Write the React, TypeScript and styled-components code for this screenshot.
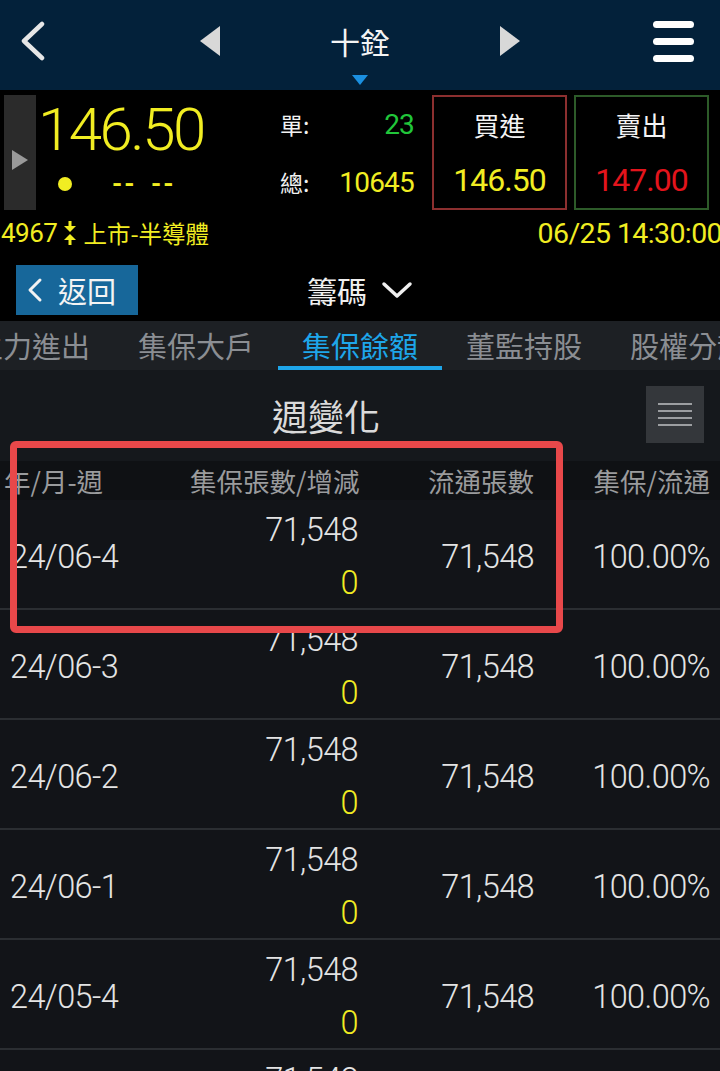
import React from 'react';
import styled, { createGlobalStyle } from 'styled-components';

const GlobalStyle = createGlobalStyle`
  html, body {
    margin: 0;
    padding: 0;
    background: #000;
  }
  body {
    font-family: Roboto, "Noto Sans CJK TC", sans-serif;
    -webkit-font-smoothing: antialiased;
  }
  * {
    box-sizing: border-box;
  }
`;

const YELLOW = '#f1ed22';

type Row = { date: string; total: string; diff: string; flow: string; ratio: string };

const rows: Row[] = [
  { date: '24/06-4', total: '71,548', diff: '0', flow: '71,548', ratio: '100.00%' },
  { date: '24/06-3', total: '71,548', diff: '0', flow: '71,548', ratio: '100.00%' },
  { date: '24/06-2', total: '71,548', diff: '0', flow: '71,548', ratio: '100.00%' },
  { date: '24/06-1', total: '71,548', diff: '0', flow: '71,548', ratio: '100.00%' },
  { date: '24/05-4', total: '71,548', diff: '0', flow: '71,548', ratio: '100.00%' },
  { date: '24/05-3', total: '71,548', diff: '0', flow: '71,548', ratio: '100.00%' },
];

const tabs = ['主力進出', '集保大戶', '集保餘額', '董監持股', '股權分散'];

const App: React.FC = () => (
  <Page>
    <GlobalStyle />
    <TopBar>
      <NavSide>
        <svg width="28" height="40" viewBox="0 0 28 40">
          <path d="M24 3 L6 20 L24 37" fill="none" stroke="#e6e6e6" strokeWidth="4.5" strokeLinecap="round" strokeLinejoin="round" />
        </svg>
      </NavSide>
      <NavCenter>
        <svg width="20" height="30" viewBox="0 0 20 30">
          <polygon points="20,0 20,30 0,15" fill="#d8d8d8" />
        </svg>
        <TitleStack>
          <StockName>十銓</StockName>
          <Indicator />
        </TitleStack>
        <svg width="20" height="30" viewBox="0 0 20 30">
          <polygon points="0,0 0,30 20,15" fill="#d8d8d8" />
        </svg>
      </NavCenter>
      <NavSide $end>
        <Burger>
          <span />
          <span />
          <span />
        </Burger>
      </NavSide>
    </TopBar>

    <Quote>
      <QuoteRow>
        <SideTab>
          <svg width="16" height="20" viewBox="0 0 16 20">
            <polygon points="0,0 16,10 0,20" fill="#9a9a9a" />
          </svg>
        </SideTab>
        <PriceBlock>
          <BigPrice>146.50</BigPrice>
          <ChangeLine>
            <Dot />
            <Dashes>-- --</Dashes>
          </ChangeLine>
        </PriceBlock>
        <Stats>
          <StatLine>
            <StatLabel>單:</StatLabel>
            <StatValue $color="#21c63a">23</StatValue>
          </StatLine>
          <StatLine>
            <StatLabel>總:</StatLabel>
            <StatValue $color={YELLOW}>10645</StatValue>
          </StatLine>
        </Stats>
        <TradeBox $border="#8c2f2f">
          <BoxTitle>買進</BoxTitle>
          <BoxValue $color={YELLOW}>146.50</BoxValue>
        </TradeBox>
        <TradeBox $border="#2d5b29">
          <BoxTitle>賣出</BoxTitle>
          <BoxValue $color="#e3141c">147.00</BoxValue>
        </TradeBox>
      </QuoteRow>
      <InfoLine>
        <InfoText>
          <Code>4967</Code>
          <svg width="12" height="24" viewBox="0 0 12 24">
            <rect x="4.5" y="0" width="3" height="5" fill={YELLOW} />
            <polygon points="0,5 12,5 6,11" fill={YELLOW} />
            <polygon points="0,19 12,19 6,13" fill={YELLOW} />
            <rect x="4.5" y="19" width="3" height="5" fill={YELLOW} />
          </svg>
          <span>上市-半導體</span>
        </InfoText>
        <TimeText>06/25 14:30:00</TimeText>
      </InfoLine>
    </Quote>

    <ActionBar>
      <BackButton>
        <svg width="18" height="28" viewBox="0 0 18 28">
          <path d="M14 4 L4 14 L14 24" fill="none" stroke="#f2f2f2" strokeWidth="3" strokeLinecap="round" strokeLinejoin="round" />
        </svg>
        返回
      </BackButton>
      <SectionPicker>
        籌碼
        <svg width="32" height="20" viewBox="0 0 32 20">
          <path d="M3 4 L16 16 L29 4" fill="none" stroke="#f0f0f0" strokeWidth="3.5" strokeLinecap="round" strokeLinejoin="round" />
        </svg>
      </SectionPicker>
    </ActionBar>

    <TabStrip>
      {tabs.map((t) => (
        <Tab key={t} $active={t === '集保餘額'}>
          {t}
        </Tab>
      ))}
    </TabStrip>

    <Content>
      <TitleRow>
        <SectionTitle>週變化</SectionTitle>
        <MenuButton>
          <span />
          <span />
          <span />
          <span />
        </MenuButton>
      </TitleRow>
      <HeaderRow>
        <HeadCell $left>年/月-週</HeadCell>
        <HeadCell>集保張數/增減</HeadCell>
        <HeadCell>流通張數</HeadCell>
        <HeadCell>集保/流通</HeadCell>
      </HeaderRow>
      {rows.map((r, i) => (
        <DataRow key={i}>
          <Cell $left>{r.date}</Cell>
          <StackCell>
            <span>{r.total}</span>
            <Diff>{r.diff}</Diff>
          </StackCell>
          <Cell>{r.flow}</Cell>
          <Cell>{r.ratio}</Cell>
        </DataRow>
      ))}
      <Highlight />
    </Content>
  </Page>
);

export default App;

const Page = styled.div`
  width: 720px;
  height: 1071px;
  overflow: hidden;
  background: #000;
`;

const TopBar = styled.header`
  height: 90px;
  background: #03213a;
  display: grid;
  grid-template-columns: 1fr auto 1fr;
  align-items: center;
`;

const NavSide = styled.div<{ $end?: boolean }>`
  display: flex;
  justify-content: ${(p) => (p.$end ? 'flex-end' : 'flex-start')};
  padding: ${(p) => (p.$end ? '0 26px 8px 0' : '0 0 8px 18px')};
`;

const NavCenter = styled.div`
  display: flex;
  align-items: center;
  gap: 110px;
  padding-bottom: 8px;
`;

const TitleStack = styled.div`
  display: flex;
  flex-direction: column;
  align-items: center;
  position: relative;
`;

const StockName = styled.div`
  font-family: "Noto Sans CJK TC", sans-serif;
  font-size: 30px;
  line-height: 36px;
  color: #f4f4f4;
`;

const Indicator = styled.div`
  position: absolute;
  top: 52px;
  width: 0;
  height: 0;
  border-left: 8px solid transparent;
  border-right: 8px solid transparent;
  border-top: 10px solid #1b90e0;
`;

const Burger = styled.div`
  width: 41px;
  display: flex;
  flex-direction: column;
  gap: 10px;
  span {
    display: block;
    height: 7px;
    border-radius: 4px;
    background: #fff;
  }
`;

const Quote = styled.section`
  height: 168px;
  background: #000;
  padding-top: 5px;
  overflow: hidden;
`;

const QuoteRow = styled.div`
  display: flex;
  height: 115px;
`;

const SideTab = styled.div`
  width: 32px;
  margin-left: 4px;
  background: #2b2b2b;
  display: flex;
  align-items: center;
  justify-content: center;
  padding-top: 14px;
`;

const PriceBlock = styled.div`
  width: 244px;
  padding-left: 2px;
  display: flex;
  flex-direction: column;
`;

const BigPrice = styled.div`
  font-size: 60px;
  font-weight: 300;
  letter-spacing: -2.5px;
  line-height: 66px;
  margin-top: 2px;
  color: ${YELLOW};
`;

const ChangeLine = styled.div`
  display: flex;
  align-items: center;
  gap: 40px;
  padding-left: 20px;
  margin-top: 6px;
`;

const Dot = styled.div`
  width: 14px;
  height: 14px;
  border-radius: 50%;
  background: ${YELLOW};
`;

const Dashes = styled.div`
  font-size: 26px;
  font-weight: 700;
  letter-spacing: 2px;
  color: ${YELLOW};
  word-spacing: 6px;
`;

const Stats = styled.div`
  width: 134px;
  display: flex;
  flex-direction: column;
  padding-top: 9px;
  gap: 18px;
  margin-right: 18px;
`;

const StatLine = styled.div`
  display: flex;
  justify-content: space-between;
  align-items: center;
  height: 40px;
`;

const StatLabel = styled.span`
  font-family: "Noto Sans CJK TC", sans-serif;
  font-size: 23px;
  color: #f2f2f2;
`;

const StatValue = styled.span<{ $color: string }>`
  font-size: 28px;
  letter-spacing: -0.8px;
  color: ${(p) => p.$color};
`;

const TradeBox = styled.div<{ $border: string }>`
  width: 135px;
  border: 2px solid ${(p) => p.$border};
  display: flex;
  flex-direction: column;
  align-items: center;
  padding-top: 10px;
  & + & {
    margin-left: 7px;
  }
`;

const BoxTitle = styled.div`
  font-family: "Noto Sans CJK TC", sans-serif;
  font-size: 26px;
  line-height: 36px;
  color: #f4f4f4;
`;

const BoxValue = styled.div<{ $color: string }>`
  font-size: 32px;
  line-height: 40px;
  margin-top: 17px;
  letter-spacing: -1px;
  color: ${(p) => p.$color};
`;

const InfoLine = styled.div`
  height: 48px;
  display: flex;
  align-items: center;
  justify-content: space-between;
  padding-bottom: 2px;
`;

const InfoText = styled.div`
  display: flex;
  align-items: center;
  gap: 7px;
  font-family: "Noto Sans CJK TC", sans-serif;
  font-size: 23.5px;
  color: ${YELLOW};
  margin-left: 1px;
`;

const Code = styled.span`
  font-family: Roboto, sans-serif;
  font-size: 26px;
  letter-spacing: -0.5px;
`;

const TimeText = styled.div`
  font-size: 28.5px;
  letter-spacing: -0.6px;
  color: ${YELLOW};
  margin-right: -2px;
`;

const ActionBar = styled.div`
  height: 63px;
  position: relative;
  display: flex;
  align-items: center;
  justify-content: center;
  background: #000;
`;

const BackButton = styled.div`
  position: absolute;
  left: 16px;
  top: 7px;
  width: 122px;
  height: 50px;
  background: #17679a;
  display: flex;
  align-items: center;
  gap: 14px;
  padding-left: 10px;
  font-family: "Noto Sans CJK TC", sans-serif;
  font-size: 29px;
  color: #f4f4f4;
`;

const SectionPicker = styled.div`
  display: flex;
  align-items: center;
  gap: 14px;
  font-family: "Noto Sans CJK TC", sans-serif;
  font-size: 30px;
  color: #f0f0f0;
`;

const TabStrip = styled.nav`
  height: 49px;
  background: #1d2024;
  display: flex;
  justify-content: center;
  overflow: hidden;
`;

const Tab = styled.div<{ $active?: boolean }>`
  flex: 0 0 164px;
  display: flex;
  align-items: center;
  justify-content: center;
  font-family: "Noto Sans CJK TC", sans-serif;
  font-size: 29px;
  white-space: nowrap;
  color: ${(p) => (p.$active ? '#1ea6ea' : '#8b8e93')};
  border-bottom: 4px solid ${(p) => (p.$active ? '#1ea6ea' : 'transparent')};
  padding-top: 2px;
`;

const Content = styled.section`
  position: relative;
  background: #15181c;
`;

const TitleRow = styled.div`
  height: 91px;
  display: flex;
  align-items: center;
`;

const SectionTitle = styled.div`
  flex: 1;
  text-align: center;
  padding-left: 6px;
  font-family: "Noto Sans CJK TC", sans-serif;
  font-size: 36px;
  color: #dadada;
  padding-bottom: 2px;
`;

const MenuButton = styled.div`
  width: 58px;
  height: 57px;
  margin-right: 16px;
  margin-bottom: 2px;
  background: #34373b;
  display: flex;
  flex-direction: column;
  align-items: center;
  justify-content: center;
  gap: 5px;
  span {
    display: block;
    width: 34px;
    height: 2px;
    background: #9c9ea1;
  }
`;

const gridCols = `
  display: grid;
  grid-template-columns: 180px 168px 176px 176px;
  padding: 0 10px;
`;

const HeaderRow = styled.div`
  ${gridCols};
  height: 39px;
  align-items: center;
  background: #0f1114;
`;

const HeadCell = styled.div<{ $left?: boolean }>`
  text-align: ${(p) => (p.$left ? 'left' : 'right')};
  font-family: "Noto Sans CJK TC", sans-serif;
  font-size: 26.5px;
  color: #9a9b9d;
  white-space: nowrap;
  margin-left: ${(p) => (p.$left ? '-6px' : '0')};
`;

const DataRow = styled.div`
  ${gridCols};
  height: 110px;
  padding-top: 4px;
  align-items: center;
  background: #121418;
  border-bottom: 2px solid #2b2e32;
`;

const Cell = styled.div<{ $left?: boolean }>`
  text-align: ${(p) => (p.$left ? 'left' : 'right')};
  font-size: 32.5px;
  font-weight: 300;
  color: #e4e4e4;
  letter-spacing: -0.6px;
  white-space: nowrap;
`;

const StackCell = styled.div`
  display: flex;
  flex-direction: column;
  align-items: flex-end;
  font-size: 32.5px;
  font-weight: 300;
  line-height: 53px;
  color: #e4e4e4;
  letter-spacing: -0.6px;
`;

const Diff = styled.span`
  color: ${YELLOW};
`;

const Highlight = styled.div`
  position: absolute;
  left: 10px;
  top: 71px;
  width: 553px;
  height: 192px;
  border: 7px solid #e8484a;
  border-radius: 6px;
  pointer-events: none;
`;
